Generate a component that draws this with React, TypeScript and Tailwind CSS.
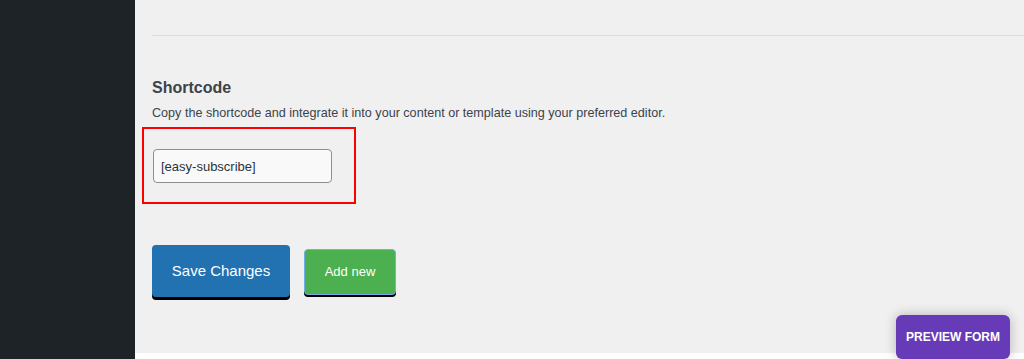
import React from "react";

export default function App() {
  return (
    <div className="relative flex h-[359px] w-[1024px] overflow-hidden bg-white font-['Liberation_Sans',Arial,sans-serif]">
      {/* sidebar */}
      <div className="h-full w-[135px] shrink-0 bg-[#1d2327]" />

      {/* main */}
      <div className="flex h-[353px] flex-1 flex-col bg-[#f0f0f1] pl-[17px]">
        <div className="h-[36px] border-b border-[#dcdcde]" />

        <div className="pt-[42px]">
          <h2 className="text-[16px] font-bold leading-[20px] text-[#3c434a]">Shortcode</h2>
          <p className="mt-[6px] text-[12.6px] leading-[18px] text-[#3c434a]">
            Copy the shortcode and integrate it into your content or template using your preferred editor.
          </p>
        </div>

        <div className="-ml-[10px] mt-[5px] h-[77px] w-[214px] border-2 border-[#ff0000] pl-[9px] pt-[20px]">
          <input
            readOnly
            value="[easy-subscribe]"
            className="h-[34px] w-[179px] rounded-[4px] border border-[#8c8f94] bg-[#f9f9f9] px-[7px] text-[13px] text-[#2c3338] outline-none"
          />
        </div>

        <div className="mt-[41px] flex items-start gap-[14px]">
          <button className="h-[52px] w-[138px] rounded-[4px] bg-[#2271b1] text-[15px] text-white shadow-[0_3px_0_#000]">
            Save Changes
          </button>
          <button className="mt-[4px] h-[46px] w-[92px] rounded-[4px] border border-[#72aee6] bg-[#4caf50] text-[13px] text-white shadow-[0_2px_0_#000]">
            Add new
          </button>
        </div>
      </div>

      {/* floating preview button */}
      <button className="absolute left-[896px] top-[315px] h-[44px] w-[114px] rounded-[6px] bg-[#673ab7] text-[12px] font-bold text-white shadow-[0_0_12px_rgba(0,0,0,0.25)]">
        PREVIEW FORM
      </button>
    </div>
  );
}
